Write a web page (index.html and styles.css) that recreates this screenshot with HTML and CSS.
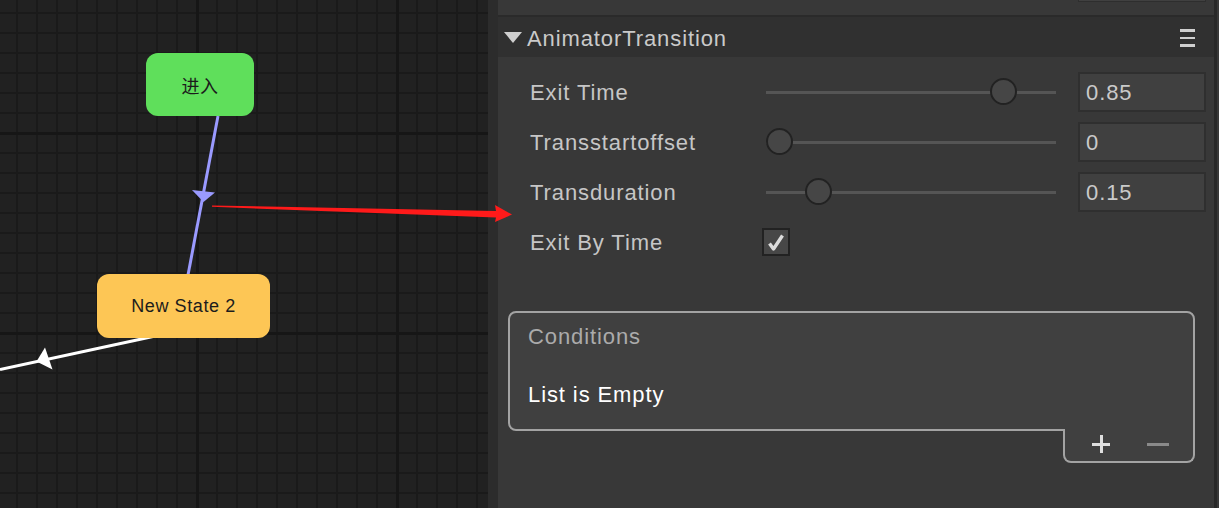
FILE: index.html
```html
<!DOCTYPE html>
<html>
<head>
<meta charset="utf-8">
<link rel="stylesheet" href="styles.css">
</head>
<body>
<div class="app">
  <div class="graph">
    <svg class="edges" width="488" height="508" viewBox="0 0 488 508">
      <line x1="218" y1="116" x2="188" y2="275" stroke="#9a9aff" stroke-width="3"/>
      <polygon points="192,190 215,192.5 203.5,202" fill="#9a9aff"/>
      <line x1="0" y1="369.5" x2="160" y2="335" stroke="#ffffff" stroke-width="3"/>
      <polygon points="36.5,361.5 45,347.5 52.5,369.5" fill="#ffffff"/>
    </svg>
    <div class="node node-entry">进入</div>
    <div class="node node-state">New State 2</div>
  </div>
  <div class="splitter"></div>
  <div class="inspector">
    <div class="prev-section"><div class="prev-field"></div></div>
    <div class="section-head">
      <span class="caret"></span>
      <span class="section-title">AnimatorTransition</span>
      <span class="menu"><i></i><i></i><i></i></span>
    </div>
    <div class="props">
      <div class="prop-row">
        <span class="prop-label">Exit Time</span>
        <div class="slider" style="--v:0.85"><div class="track"></div><div class="thumb"></div></div>
        <div class="num">0.85</div>
      </div>
      <div class="prop-row">
        <span class="prop-label">Transstartoffset</span>
        <div class="slider" style="--v:0"><div class="track"></div><div class="thumb"></div></div>
        <div class="num">0</div>
      </div>
      <div class="prop-row">
        <span class="prop-label">Transduration</span>
        <div class="slider" style="--v:0.15"><div class="track"></div><div class="thumb"></div></div>
        <div class="num">0.15</div>
      </div>
      <div class="prop-row">
        <span class="prop-label">Exit By Time</span>
        <div class="checkbox">
          <svg width="27" height="27" viewBox="0 0 27 27"><path d="M7.5 15.5 L11.5 21 L20.5 7.5" fill="none" stroke="#dcdcdc" stroke-width="3.4" stroke-linejoin="round"/></svg>
        </div>
      </div>
    </div>
    <div class="conditions">
      <div class="cond-box">
        <div class="cond-title">Conditions</div>
        <div class="cond-empty">List is Empty</div>
      </div>
      <div class="cond-footer">
        <span class="btn-add"></span>
        <span class="btn-remove"></span>
      </div>
    </div>
  </div>
  <div class="scrollbar"></div>
</div>
<svg class="annotation" width="1219" height="508" viewBox="0 0 1219 508">
  <polygon points="212,205.5 496,211 495,205 512,214.5 495,222 496,217.5 212,206.8" fill="#ff1a1a"/>
</svg>
</body>
</html>
```
FILE: styles.css
```css
html, body {
  margin: 0;
  padding: 0;
}
body {
  background: #383838;
  width: 1219px;
  height: 508px;
  overflow: hidden;
  position: relative;
  font-family: "Liberation Sans", Arial, sans-serif;
}
.app {
  display: flex;
  height: 508px;
}
.graph {
  position: relative;
  width: 488px;
  flex: none;
  background-color: #212121;
  background-image:
    linear-gradient(to right, transparent 196px, #161616 196px, #161616 199px, transparent 199px),
    linear-gradient(to bottom, transparent 132px, #161616 132px, #161616 135px, transparent 135px),
    linear-gradient(to right, transparent 16px, #1a1a1a 16px, #1a1a1a 18px, transparent 18px),
    linear-gradient(to bottom, transparent 12px, #1a1a1a 12px, #1a1a1a 14px, transparent 14px);
  background-size: 200px 200px, 200px 200px, 20px 20px, 20px 20px;
  overflow: hidden;
}
.edges {
  position: absolute;
  left: 0;
  top: 0;
}
.node {
  position: absolute;
  display: flex;
  align-items: center;
  justify-content: center;
  border-radius: 12px;
  color: #1c1c1c;
}
.node-entry {
  left: 146px;
  top: 53px;
  width: 108px;
  height: 63px;
  background: #5fdf5b;
  font-family: "Noto Sans CJK SC", "Liberation Sans", sans-serif;
  font-size: 18px;
  letter-spacing: 0.5px;
}
.node-state {
  left: 97px;
  top: 274px;
  width: 173px;
  height: 64px;
  background: #fdc655;
  font-size: 18px;
  letter-spacing: 0.6px;
}
.splitter {
  width: 10px;
  flex: none;
  background: #2c2c2c;
}
.inspector {
  width: 716px;
  flex: none;
  background: #383838;
  display: flex;
  flex-direction: column;
  letter-spacing: 0.9px;
}
.scrollbar {
  width: 3px;
  flex: none;
  background: #282828;
}
.prev-section {
  height: 15px;
  border-bottom: 2px solid #2a2a2a;
  position: relative;
}
.prev-field {
  position: absolute;
  left: 580px;
  top: -10px;
  width: 126px;
  height: 10px;
  background: #404040;
  border: 1px solid #2e2e2e;
}
.section-head {
  height: 40px;
  background: #303030;
  display: flex;
  align-items: center;
  padding-left: 6px;
  padding-right: 19px;
}
.caret {
  width: 0;
  height: 0;
  border-left: 9.5px solid transparent;
  border-right: 9.5px solid transparent;
  border-top: 11px solid #cfcfcf;
  margin-right: 5px;
  margin-top: 1px;
}
.section-title {
  flex: 1;
  color: #cacaca;
  font-size: 22px;
  line-height: 26px;
  padding-top: 3px;
}
.menu {
  display: flex;
  flex-direction: column;
  gap: 5px;
  width: 15px;
  margin-top: 2px;
}
.menu i {
  display: block;
  height: 2.5px;
  background: #cfcfcf;
}
.props {
  padding: 10px 8px 0 32px;
}
.prop-row {
  height: 50px;
  display: flex;
  align-items: center;
}
.prop-label {
  width: 236px;
  flex: none;
  color: #c6c6c6;
  font-size: 22px;
  line-height: 26px;
  padding-top: 2px;
}
.slider {
  position: relative;
  width: 290px;
  height: 28px;
  flex: none;
  margin-right: 22px;
}
.track {
  position: absolute;
  left: 0;
  right: 0;
  top: 13px;
  height: 3px;
  background: #555555;
}
.thumb {
  position: absolute;
  top: 0;
  left: calc(var(--v) * 263px);
  width: 23px;
  height: 23px;
  border-radius: 50%;
  background: #464646;
  border: 2px solid #222222;
}
.num {
  width: 118px;
  height: 36px;
  flex: none;
  background: #404040;
  border: 2px solid #2f2f2f;
  color: #cacaca;
  font-size: 22px;
  line-height: 38px;
  padding-left: 6px;
}
.checkbox {
  width: 24px;
  height: 24px;
  margin-left: -4px;
  background: #474747;
  border: 2px solid #222222;
  position: relative;
}
.checkbox svg {
  position: absolute;
  left: -2px;
  top: -2px;
}
.conditions {
  margin: 44px 0 0 10px;
  width: 687px;
  display: flex;
  flex-direction: column;
  align-items: flex-end;
}
.cond-box {
  box-sizing: border-box;
  width: 687px;
  height: 120px;
  border: 2px solid #a3a3a3;
  border-radius: 8px 8px 0 8px;
  background: #404040;
  padding: 11px 0 0 18px;
}
.cond-title {
  color: #ababab;
  font-size: 22px;
  line-height: 26px;
}
.cond-empty {
  margin-top: 32px;
  color: #ffffff;
  font-size: 22px;
  line-height: 26px;
}
.cond-footer {
  box-sizing: border-box;
  width: 132px;
  height: 34px;
  margin-top: -2px;
  border: 2px solid #a3a3a3;
  border-top: none;
  border-radius: 0 0 8px 8px;
  background: #404040;
  position: relative;
  display: flex;
  align-items: center;
  padding-bottom: 2px;
}
.btn-add {
  position: relative;
  width: 18px;
  height: 18px;
  margin-left: 27px;
}
.btn-add::before, .btn-add::after {
  content: "";
  position: absolute;
  background: #dedede;
}
.btn-add::before {
  left: 0;
  right: 0;
  top: 8px;
  height: 2.5px;
}
.btn-add::after {
  top: 0;
  bottom: 0;
  left: 8px;
  width: 2.5px;
}
.btn-remove {
  width: 22px;
  height: 3px;
  margin-left: 37px;
  background: #8a8a8a;
}
.annotation {
  position: absolute;
  left: 0;
  top: 0;
  pointer-events: none;
}
```
